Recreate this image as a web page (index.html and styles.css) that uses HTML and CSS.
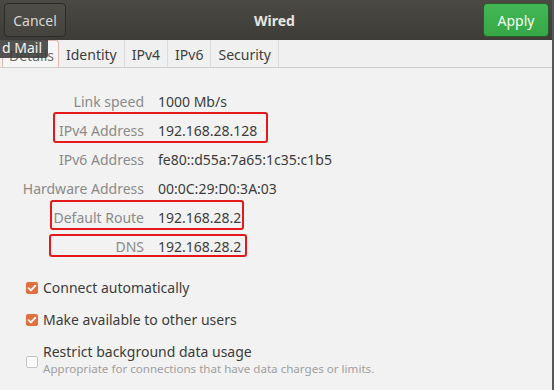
FILE: index.html
```html
<!DOCTYPE html>
<html>
<head>
<meta charset="utf-8">
<link rel="stylesheet" href="styles.css">
</head>
<body>
<div class="window">
  <header class="headerbar">
    <button class="btn cancel">Cancel</button>
    <div class="title">Wired</div>
    <button class="btn apply">Apply</button>
  </header>
  <nav class="tabs">
    <div class="tab active">Details</div>
    <div class="tab">Identity</div>
    <div class="tab">IPv4</div>
    <div class="tab">IPv6</div>
    <div class="tab">Security</div>
  </nav>
  <div class="tooltip">d Mail</div>
  <main class="content">
    <div class="details">
      <div class="label">Link speed</div><div class="value">1000 Mb/s</div>
      <div class="label">IPv4 Address</div><div class="value">192.168.28.128</div>
      <div class="label">IPv6 Address</div><div class="value">fe80::d55a:7a65:1c35:c1b5</div>
      <div class="label">Hardware Address</div><div class="value">00:0C:29:D0:3A:03</div>
      <div class="label">Default Route</div><div class="value">192.168.28.2</div>
      <div class="label">DNS</div><div class="value">192.168.28.2</div>
    </div>
    <div class="mark mark-ipv4"></div>
    <div class="mark mark-route"></div>
    <div class="mark mark-dns"></div>
    <div class="checks">
      <label class="check">
        <span class="box on"><svg viewBox="0 0 12 12" width="12" height="12"><path d="M2.6 6.2 L5 8.4 L9.4 3.6" fill="none" stroke="#fff" stroke-width="1.8" stroke-linecap="round" stroke-linejoin="round"/></svg></span>
        <span class="ctext">Connect automatically</span>
      </label>
      <label class="check">
        <span class="box on"><svg viewBox="0 0 12 12" width="12" height="12"><path d="M2.6 6.2 L5 8.4 L9.4 3.6" fill="none" stroke="#fff" stroke-width="1.8" stroke-linecap="round" stroke-linejoin="round"/></svg></span>
        <span class="ctext">Make available to other users</span>
      </label>
      <label class="check restrict">
        <span class="box off"></span>
        <span class="ctext">Restrict background data usage<span class="sub">Appropriate for connections that have data charges or limits.</span></span>
      </label>
    </div>
  </main>
  <div class="edge"></div>
</div>
</body>
</html>
```
FILE: styles.css
```css
* { box-sizing: border-box; }
html, body { margin: 0; padding: 0; }
body {
  width: 554px;
  height: 390px;
  overflow: hidden;
  background: #f2f2f2;
  font-family: "Noto Sans", "DejaVu Sans", sans-serif;
  font-size: 14px;
  color: #3c3c3c;
}
.window { position: relative; width: 554px; height: 390px; }
.headerbar {
  height: 40px;
  background: linear-gradient(#4b4943, #3e3c37);
  display: flex;
  align-items: center;
  justify-content: space-between;
  padding: 0 4px 0 4px;
}
.btn {
  font-family: inherit;
  font-size: 14px;
  height: 34px;
  border-radius: 4px;
  padding: 0 8px;
  border: 1px solid #2c2b27;
}
.cancel {
  width: 62px;
  background: linear-gradient(#4f4d47, #45433e);
  color: #d6d6d2;
}
.apply {
  width: 66px;
  margin-right: 1px;
  background: linear-gradient(#43b855, #36a747);
  color: #f4fff4;
  border-color: #2a5a2e;
}
.title {
  color: #e6e6e3;
  font-weight: bold;
  font-size: 14px;
  margin-left: 0;
}
.tabs {
  height: 28px;
  display: flex;
  background: #f0f0f0;
  border-bottom: 1px solid #cfcfcf;
  padding-left: 2px;
}
.tab {
  padding: 5px 7px 0 7px;
  color: #3e3e3e;
  border-right: 1px solid #dcdcdc;
  line-height: 20px;
}
.tab.active {
  background: #f6f6f6;
  border: 1px solid #e5b7b2;
  border-bottom: none;
  border-radius: 3px 3px 0 0;
  width: 57px;
  padding: 5px 6px 0 6px;
  color: #6a6a6a;
}
.tooltip {
  position: absolute;
  left: -4px;
  top: 37px;
  height: 21px;
  padding: 0 6px 0 6px;
  background: rgba(60, 60, 58, 0.88);
  color: #f4f4f4;
  border-radius: 3px;
  line-height: 21px;
  font-size: 14px;
}
.content { position: relative; padding-top: 24px; }
.details {
  display: grid;
  grid-template-columns: 144px auto;
  column-gap: 14px;
  row-gap: 9px;
  line-height: 20px;
}
.label { text-align: right; color: #8a8a8a; }
.value { color: #3c3c3c; }
.mark {
  position: absolute;
  border: 2.5px solid #e3191b;
  border-radius: 3px;
}
.mark-ipv4 { left: 53px; top: 44px; width: 215px; height: 31px; }
.mark-route { left: 50px; top: 132px; width: 194px; height: 30px; }
.mark-dns { left: 49px; top: 166px; width: 198px; height: 23px; }
.checks {
  padding: 21px 0 0 26px;
  display: flex;
  flex-direction: column;
  gap: 12px;
}
.check { display: flex; align-items: center; gap: 5px; line-height: 20px; }
.box {
  width: 12px; height: 12px;
  border-radius: 2px;
  display: inline-flex;
  flex: none;
}
.box.on { background: #e2703f; border: none; }
.box.off { background: #fafafa; border: 1px solid #c6c6c6; }
.restrict { align-items: flex-start; }
.restrict .box { margin-top: 14px; }
.ctext { display: flex; flex-direction: column; }
.sub { font-size: 11.6px; color: #a0a0a0; line-height: 14px; }
.edge {
  position: absolute;
  right: 0; top: 0;
  width: 2px; height: 390px;
  background: #585858;
}
```
